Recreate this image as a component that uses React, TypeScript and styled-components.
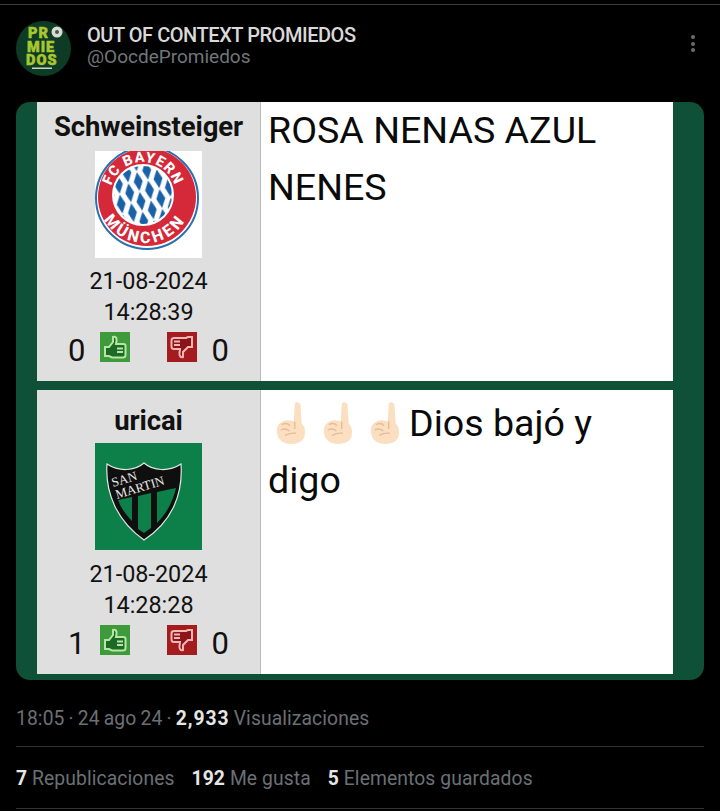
import styled, { createGlobalStyle } from "styled-components";

const GlobalStyle = createGlobalStyle`
  html, body {
    margin: 0;
    padding: 0;
    background: #000;
    font-family: Roboto, "Liberation Sans", sans-serif;
  }
`;

const Page = styled.div`
  width: 720px;
  height: 811px;
  overflow: hidden;
  background: #000;
  box-sizing: border-box;
  padding-top: 4px;
`;

const TopLine = styled.div`
  height: 1px;
  background: #3a3d40;
`;

const Header = styled.div`
  display: flex;
  align-items: flex-start;
  padding: 16px 16px 0;
  height: 77px;
  box-sizing: border-box;
`;

const Avatar = styled.svg`
  width: 55px;
  height: 55px;
  flex: none;
`;

const Names = styled.div`
  margin-left: 16px;
  flex: 1;
  padding-top: 4px;
`;

const DisplayName = styled.div`
  color: #d9d9d9;
  font-size: 20px;
  font-weight: 500;
  line-height: 21px;
  letter-spacing: -0.45px;
`;

const Handle = styled.div`
  color: #71767b;
  font-size: 19px;
  line-height: 22px;
`;

const More = styled.div`
  display: flex;
  flex-direction: column;
  gap: 2.5px;
  margin: 14px 9px 0 0;
`;

const Dot = styled.span`
  width: 4px;
  height: 4px;
  border-radius: 50%;
  background: #6a6d70;
`;

const Shot = styled.div`
  margin: 20px 16px 0;
  width: 688px;
  height: 578px;
  box-sizing: border-box;
  padding: 0 31px 7px 21px;
  border-radius: 14px;
  background: #0f5038;
  display: flex;
  flex-direction: column;
  gap: 9px;
`;

const Post = styled.div<{ $height: number }>`
  display: flex;
  height: ${(p) => p.$height}px;
  flex: none;
`;

const Side = styled.div`
  width: 224px;
  flex: none;
  box-sizing: border-box;
  background: #dfdfdf;
  border-right: 1px solid #b9bcbb;
  display: flex;
  flex-direction: column;
  align-items: center;
  color: #111;
`;

const User = styled.div<{ $top: number }>`
  font-size: 27.5px;
  font-weight: 700;
  line-height: 30px;
  margin-top: ${(p) => p.$top}px;
  white-space: nowrap;
  letter-spacing: -0.1px;
`;

const Badge = styled.svg<{ $top: number }>`
  width: 107px;
  height: 107px;
  margin-top: ${(p) => p.$top}px;
  flex: none;
`;

const Stamp = styled.div`
  font-size: 23.4px;
  line-height: 30.5px;
  text-align: center;
`;

const Stamps = styled.div<{ $top: number }>`
  margin-top: ${(p) => p.$top}px;
`;

const Votes = styled.div`
  display: flex;
  align-items: center;
  width: 161px;
  margin-top: 6px;
  font-size: 31px;
  line-height: 36px;
`;

const Count = styled.span`
  width: 32px;
  text-align: left;
  flex: none;
`;

const CountRight = styled(Count)`
  text-align: right;
`;

const Thumb = styled.svg`
  width: 30px;
  height: 30px;
  flex: none;
  margin-top: -8px;
`;

const VoteGap = styled.div`
  flex: 1;
`;

const Message = styled.div<{ $top?: number }>`
  flex: 1;
  background: #fff;
  color: #0a0a0a;
  font-size: 37.6px;
  line-height: 57px;
  padding: ${(p) => p.$top ?? 0}px 30px 0 7px;
`;

const Hand = styled.svg`
  width: 37px;
  height: 45px;
  margin: 0 5px;
  vertical-align: -9px;
`;

const Stats = styled.div`
  margin: 0 16px;
  width: 688px;
`;

const Meta = styled.div`
  color: #6b7075;
  font-size: 19.3px;
  line-height: 24px;
  padding: 27px 0 15px;
  border-bottom: 1px solid #2f3336;
  letter-spacing: 0.1px;
  word-spacing: -0.8px;
`;

const Views = styled.b`
  color: #e6e6e6;
  font-weight: 700;
  letter-spacing: 1px;
`;

const Counts = styled.div`
  display: flex;
  gap: 17px;
  color: #6b7075;
  font-size: 19.3px;
  line-height: 24px;
  padding: 20px 0 17px;
  border-bottom: 1px solid #2f3336;
  letter-spacing: 0.1px;
`;

const Strong = styled.b`
  color: #e6e6e6;
  font-weight: 700;
`;

function PromiedosAvatar() {
  return (
    <Avatar viewBox="0 0 55 55">
      <circle cx="27.5" cy="27.5" r="27.5" fill="#0e3b25" />
      <g
        fill="#a9c72f"
        stroke="#a9c72f"
        strokeWidth="0.5"
        fontFamily="Roboto, sans-serif"
        fontWeight="900"
        fontSize="14.5"
        letterSpacing="1"
      >
        <text x="12" y="17">PR</text>
        <text x="11" y="31">MIE</text>
        <text x="10" y="44">DOS</text>
      </g>
      <circle cx="41" cy="11" r="5.5" fill="#d9ddd6" />
      <circle cx="41" cy="11" r="2" fill="#4b5a4d" />
      <rect x="16" y="46.5" width="20" height="1.5" fill="#c9d4c4" />
    </Avatar>
  );
}

function BayernBadge() {
  return (
    <Badge $top={9} viewBox="0 0 107 107">
      <defs>
        <pattern id="lozenge" width="20" height="20" patternUnits="userSpaceOnUse" patternTransform="rotate(-8 48 43)">
          <rect width="20" height="20" fill="#fff" />
          <path d="M5 0.500 L9.500 10 L5 19.500 L0.500 10 Z" fill="#1a62a8" />
          <path d="M15 -9.500 L19.500 0 L15 9.500 L10.500 0 Z" fill="#1a62a8" />
          <path d="M15 10.500 L19.500 20 L15 29.500 L10.500 20 Z" fill="#1a62a8" />
        </pattern>
        <path id="bayernTop" d="M 15 44 A 33 33 0 0 1 81 44" />
        <path id="bayernBottom" d="M 3 45 A 47 47 0 0 0 97 45" />
      </defs>
      <rect width="107" height="107" fill="#fff" />
      <circle cx="52" cy="47" r="51" fill="#fff" stroke="#2a6fae" strokeWidth="2" />
      <circle cx="52" cy="46" r="49" fill="#d5293a" />
      <circle cx="48" cy="44" r="31" fill="#fff" />
      <circle cx="48" cy="44" r="29" fill="url(#lozenge)" />
      <g fill="#fff" fontFamily="Roboto, sans-serif" fontWeight="800" fontSize="14.5" letterSpacing="1">
        <text>
          <textPath href="#bayernTop" startOffset="50%" textAnchor="middle">FC BAYERN</textPath>
        </text>
        <text fontSize="16" letterSpacing="3">
          <textPath href="#bayernBottom" startOffset="50%" textAnchor="middle">MÜNCHEN</textPath>
        </text>
      </g>
    </Badge>
  );
}

function SanMartinBadge() {
  return (
    <Badge $top={7} viewBox="0 0 107 107">
      <rect width="107" height="107" fill="#0c8048" />
      <path
        d="M12 21 C24 29 40 28 49 20 C58 28 74 29 86 21 C88 50 78 78 49 97 C22 78 10 50 12 21 Z"
        fill="#0f0f0f"
        stroke="#dfe8e2"
        strokeWidth="1.2"
      />
      <g fill="#0c8048">
        <path d="M23 57 L37 54 L37 78 C31 72 26 65 23 57 Z" />
        <path d="M43 53 L56 50 L56 85 L49 90 L43 86 Z" />
        <path d="M62 49 L81 45 C78 58 72 70 62 80 Z" />
      </g>
      <g fill="#e9e9e9" fontFamily="Liberation Serif, serif" fontSize="13">
        <text transform="rotate(-17 18 44)" x="18" y="44">SAN</text>
        <text transform="rotate(-17 22 56)" x="22" y="56">MARTIN</text>
      </g>
    </Badge>
  );
}

function ThumbUp() {
  return (
    <Thumb viewBox="0 0 30 30">
      <rect width="30" height="30" fill="#3f9a3c" />
      <path
        d="M5 15 h4 l4 -5 v-5 c2.500 -1 4 1 3.500 4 l-.5 3 h7.500 c1.500 0 2 1 2 2 v9 c0 1.500 -1 2.500 -2.500 2.500 h-11 l-3 -1.500 h-4 Z"
        fill="#1d6a26"
        stroke="#b5e6a4"
        strokeWidth="2"
      />
      <path d="M17 16.500 h6 M17 20 h6" stroke="#b5e6a4" strokeWidth="1.800" />
    </Thumb>
  );
}

function ThumbDown() {
  return (
    <Thumb viewBox="0 0 30 30">
      <rect width="30" height="30" fill="#a51c1f" />
      <path
        d="M25 5 h-4 l-2 1 h-12 c-1.500 0 -2.500 1 -2.500 2.500 v6 c0 1.500 1 2.500 2.500 2.500 h6 l-.5 4 c-.5 3 1.500 5 3.500 4 v-5 l5 -5 h4 Z"
        fill="#8c1418"
        stroke="#f1b7b5"
        strokeWidth="2"
      />
      <path d="M7 9.500 h6 M7 13 h6" stroke="#f1b7b5" strokeWidth="1.800" />
    </Thumb>
  );
}

function PointUp() {
  return (
    <Hand viewBox="0 0 34 42">
      <path
        d="M22 2 C24.500 2 25.500 3.500 25.500 6 L26.500 22 C29 24 30 28 29.500 32 C29 38 24 41 17 41 C9 41 4 37 3.500 30 C3 26 4.500 22 8 20.500 C11 18.500 15 18.500 19 20 L20 5 C20 3 20.500 2 22 2 Z"
        fill="#fbdfc0"
      />
      <path
        d="M8 23 C11 21.500 14 22 15.500 24 M7 28 C10 26.500 13 27 15 29 M11 33 C14 31.500 17 30.500 21 31 M20 20 L20 27"
        fill="none"
        stroke="#e5bd97"
        strokeWidth="1.300"
      />
    </Hand>
  );
}

function Votebar({ up, down }: { up: number; down: number }) {
  return (
    <Votes>
      <Count>{up}</Count>
      <ThumbUp />
      <VoteGap />
      <ThumbDown />
      <CountRight>{down}</CountRight>
    </Votes>
  );
}

export default function App() {
  return (
    <Page>
      <GlobalStyle />
      <TopLine />
      <Header>
        <PromiedosAvatar />
        <Names>
          <DisplayName>OUT OF CONTEXT PROMIEDOS</DisplayName>
          <Handle>@OocdePromiedos</Handle>
        </Names>
        <More>
          <Dot />
          <Dot />
          <Dot />
        </More>
      </Header>
      <Shot>
        <Post $height={279}>
          <Side>
            <User $top={10}>Schweinsteiger</User>
            <BayernBadge />
            <Stamps $top={8}>
              <Stamp>21-08-2024</Stamp>
              <Stamp>14:28:39</Stamp>
            </Stamps>
            <Votebar up={0} down={0} />
          </Side>
          <Message>ROSA NENAS AZUL NENES</Message>
        </Post>
        <Post $height={284}>
          <Side>
            <User $top={16}>uricai</User>
            <SanMartinBadge />
            <Stamps $top={9}>
              <Stamp>21-08-2024</Stamp>
              <Stamp>14:28:28</Stamp>
            </Stamps>
            <Votebar up={1} down={0} />
          </Side>
          <Message $top={5}>
            <PointUp />
            <PointUp />
            <PointUp />
            Dios bajó y digo
          </Message>
        </Post>
      </Shot>
      <Stats>
        <Meta>
          18:05 · 24 ago 24 · <Views>2,933</Views> Visualizaciones
        </Meta>
        <Counts>
          <span>
            <Strong>7</Strong> Republicaciones
          </span>
          <span>
            <Strong>192</Strong> Me gusta
          </span>
          <span>
            <Strong>5</Strong> Elementos guardados
          </span>
        </Counts>
      </Stats>
    </Page>
  );
}
